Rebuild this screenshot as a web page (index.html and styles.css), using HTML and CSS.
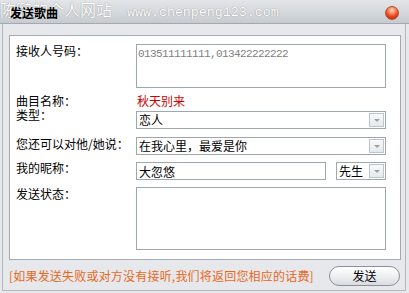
FILE: index.html
```html
<!DOCTYPE html>
<html lang="zh-CN">
<head>
    <meta charset="UTF-8">
    <meta name="viewport" content="width=device-width, initial-scale=1.0">
    <title>发送歌曲</title>
    <link rel="stylesheet" href="styles.css">
</head>
<body>
    <div class="window">
        <div class="titlebar">
            <span class="watermark">陈鹏的个人网站<span class="wm-url">www.chenpeng123.com</span></span>
            <span class="title">发送歌曲</span>
            <span class="close-btn"></span>
        </div>

        <div class="body">
            <div class="panel">
                <div class="row row-receivers">
                    <label class="label">接收人号码：</label>
                    <textarea class="field receivers" readonly>013511111111,013422222222</textarea>
                </div>
                <div class="row row-song">
                    <label class="label">曲目名称：</label>
                    <span class="song-name">秋天别来</span>
                </div>
                <div class="row row-type">
                    <label class="label label-up">类型：</label>
                    <div class="field select">
                        <span>恋人</span>
                        <span class="arrow"></span>
                    </div>
                </div>
                <div class="row row-say">
                    <label class="label">您还可以对他/她说：</label>
                    <div class="field select">
                        <span>在我心里，最爱是你</span>
                        <span class="arrow"></span>
                    </div>
                </div>
                <div class="row row-nick">
                    <label class="label label-nick">我的昵称：</label>
                    <div class="nick-group">
                        <input class="field nick" type="text" value="大忽悠">
                        <div class="field select gender">
                            <span>先生</span>
                            <span class="arrow"></span>
                        </div>
                    </div>
                </div>
                <div class="row row-status">
                    <label class="label">发送状态：</label>
                    <textarea class="field status" readonly></textarea>
                </div>
            </div>

            <div class="footer">
                <p class="notice">[如果发送失败或对方没有接听,我们将返回您相应的话费]</p>
                <button class="send-btn">发送</button>
            </div>
        </div>
    </div>
</body>
</html>
```

FILE: styles.css
```css
* {
    margin: 0;
    padding: 0;
    box-sizing: border-box;
    font-family: "Noto Sans CJK SC", "Liberation Sans", sans-serif;
}

body {
    width: 409px;
    height: 293px;
    overflow: hidden;
    background: #e6e8eb;
    font-size: 12px;
    color: #000;
}

.window {
    height: 293px;
    display: flex;
    flex-direction: column;
}

/* barra de titulo */
.titlebar {
    position: relative;
    height: 24px;
    padding-top: 3px;
    display: flex;
    align-items: center;
    background: linear-gradient(#e3e5e8, #d6d9dd 50%, #c7cbd0);
    border-bottom: 1px solid #a3a9af;
}

.watermark {
    position: absolute;
    left: 0;
    top: 1px;
    font-size: 16px;
    line-height: 16px;
    color: #ffffff;
    text-shadow: 0 0 1px rgba(90, 90, 90, 0.8);
    white-space: nowrap;
}

.wm-url {
    margin-left: 15px;
    font-family: "Liberation Mono", monospace;
    font-size: 13.3px;
}

.title {
    position: relative;
    padding-left: 10px;
    font-weight: bold;
    line-height: 14px;
}

.close-btn {
    width: 14px;
    height: 14px;
    margin-left: auto;
    margin-right: 10px;
    border-radius: 50%;
    border: 1px solid #a8582f;
    background: radial-gradient(circle at 50% 28%, #ffe2d6 0%, #ff8a60 30%, #e8401c 60%, #b51d08 100%);
}

/* corpo */
.body {
    flex: 1;
    margin: 0 3px 2px 2px;
    padding: 11px 4px 0 6px;
    border-left: 1px solid #b3b8bd;
    border-right: 1px solid #b3b8bd;
    border-bottom: 1px solid #b3b8bd;
}

.panel {
    background: #fff;
    border: 1px solid #a4aab0;
    padding: 8px 0 9px 6px;
}

.row {
    display: flex;
    align-items: flex-start;
}

.label {
    width: 120px;
    flex-shrink: 0;
    line-height: 14px;
}

.label-up {
    margin-top: -3px;
}

.label-nick {
    margin-top: -1px;
}

.row-song {
    margin-top: 6px;
}

.row-type {
    margin-top: 3px;
}

.row-say {
    margin-top: 8px;
}

.row-nick,
.row-status {
    margin-top: 7px;
}

.song-name {
    line-height: 14px;
    padding-left: 1px;
    color: #cc0000;
}

.field {
    width: 250px;
    border: 1px solid #9ea6ae;
    background: #fff;
    font-size: 12px;
    color: #000;
    outline: none;
}

textarea.field {
    resize: none;
    display: block;
}

.receivers {
    height: 44px;
    padding: 2px 1px;
    font-family: "Liberation Mono", monospace;
    font-size: 11px;
    letter-spacing: -0.6px;
    line-height: 14px;
    color: #808080;
}

.status {
    height: 63px;
}

.select {
    height: 18px;
    padding: 0 1px 0 2px;
    display: flex;
    align-items: center;
    justify-content: space-between;
    line-height: 14px;
}

.arrow {
    width: 15px;
    height: 14px;
    border: 1px solid #bcc4cc;
    background: linear-gradient(#f8f9fa, #e6e9ec);
    position: relative;
}

.arrow::after {
    content: "";
    position: absolute;
    left: 4px;
    top: 5px;
    border-left: 3px solid transparent;
    border-right: 3px solid transparent;
    border-top: 3px solid #9aa1a8;
}

.nick-group {
    display: flex;
    gap: 10px;
}

.nick {
    width: 190px;
    height: 18px;
    padding: 0 2px;
    line-height: 16px;
}

.gender {
    width: 50px;
}

/* rodape */
.footer {
    margin-top: 6px;
    display: flex;
    align-items: center;
    justify-content: space-between;
    padding-right: 1px;
}

.notice {
    color: #e8691c;
    line-height: 14px;
    letter-spacing: 0.2px;
    white-space: nowrap;
}

.send-btn {
    width: 71px;
    height: 20px;
    border-radius: 10px;
    border: 1px solid #8b9198;
    background: linear-gradient(#ffffff, #eceef0 55%, #d9dcdf);
    font-size: 12px;
    color: #000;
    line-height: 16px;
    cursor: pointer;
}
```
